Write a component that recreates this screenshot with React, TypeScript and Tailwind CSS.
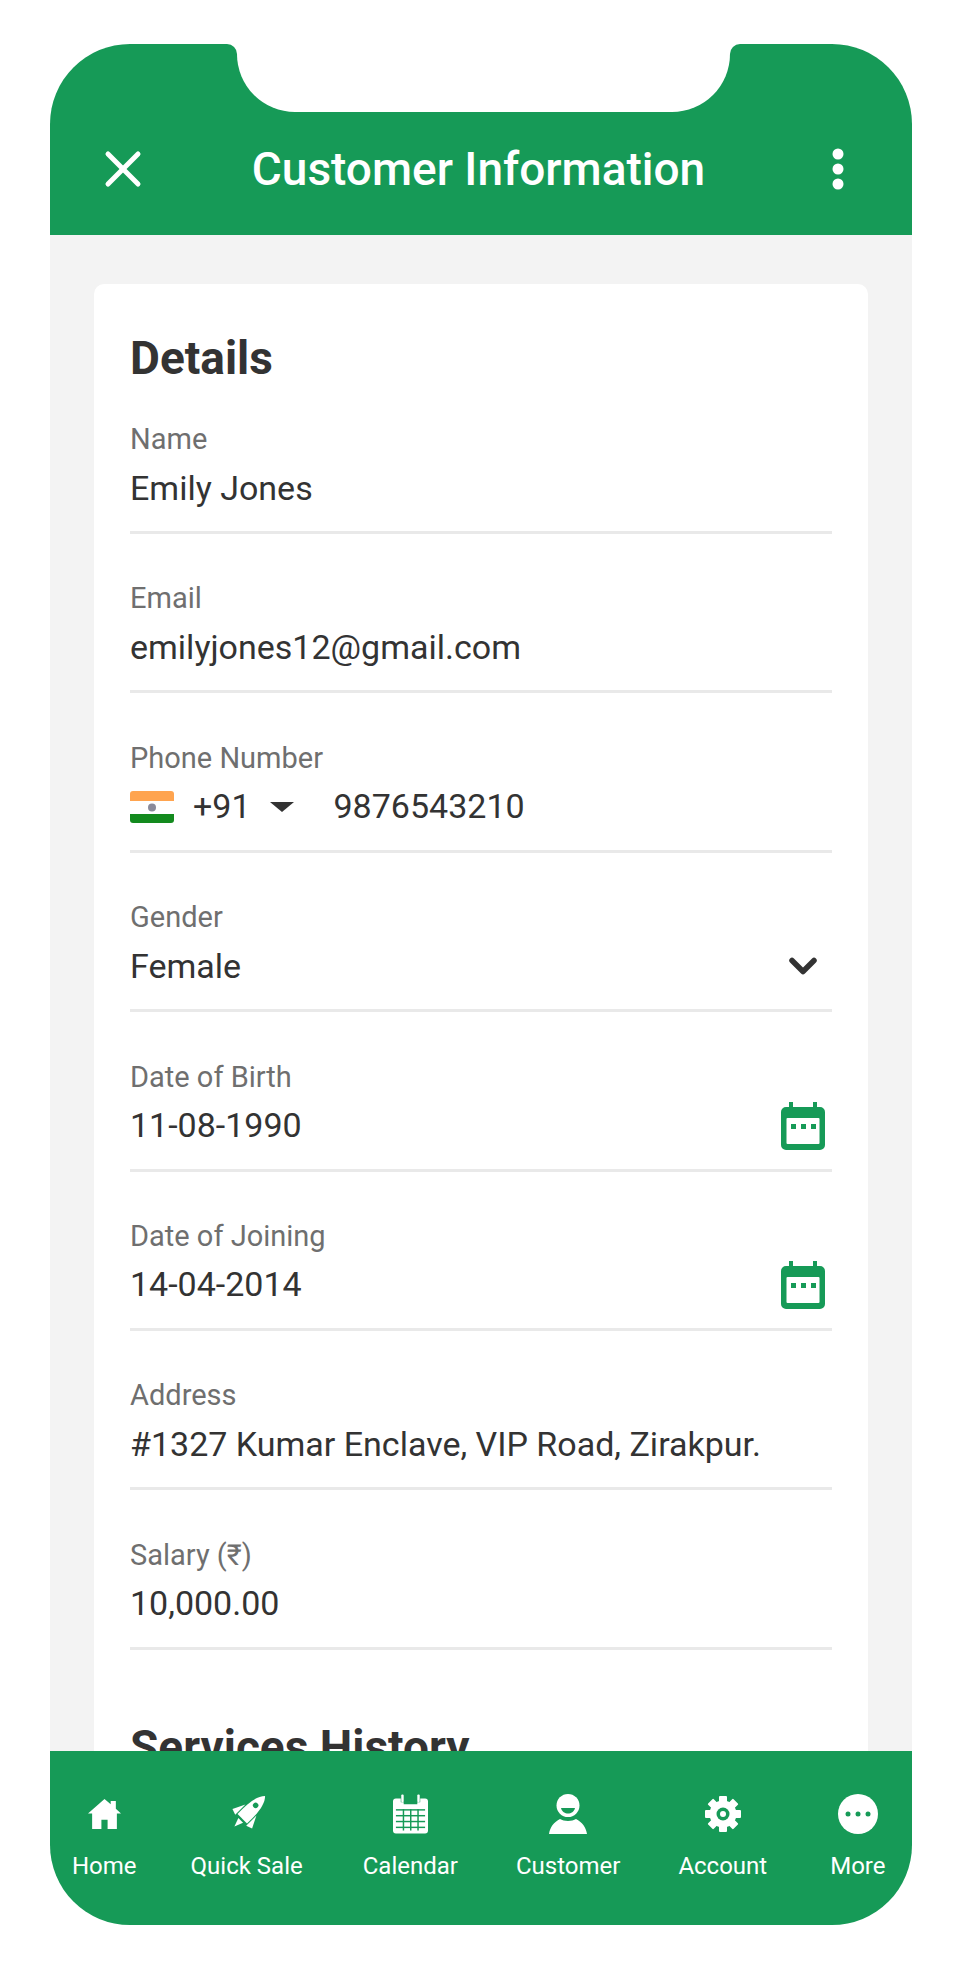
import React from 'react';
import { X, ChevronDown } from 'lucide-react';

function CalendarIcon() {
    return (
        <svg width="44" height="48" viewBox="0 0 44 48" className="text-[#169a57]">
            <path d="M8 0h4v5h20V0h4v5h3a5 5 0 0 1 5 5v33a5 5 0 0 1-5 5H5a5 5 0 0 1-5-5V10a5 5 0 0 1 5-5h3z" fill="currentColor" />
            <rect x="5.500" y="16" width="33" height="26" rx="1" fill="white" />
            <rect x="10" y="22" width="5" height="5" fill="currentColor" />
            <rect x="20" y="22" width="5" height="5" fill="currentColor" />
            <rect x="30" y="22" width="5" height="5" fill="currentColor" />
        </svg>
    );
}

function IndiaFlag() {
    return (
        <svg width="44" height="32" viewBox="0 0 44 32">
            <path d="M3 0h38a3 3 0 0 1 3 3v7H0V3a3 3 0 0 1 3-3z" fill="#ffa44f" />
            <rect y="10" width="44" height="13" fill="white" />
            <path d="M0 23h44v6a3 3 0 0 1-3 3H3a3 3 0 0 1-3-3z" fill="#138a1e" />
            <circle cx="22" cy="16.500" r="4" fill="#8a8a9a" />
        </svg>
    );
}

function Kebab() {
    return (
        <svg width="50" height="50" viewBox="0 0 50 50" fill="white">
            <circle cx="25" cy="10" r="5.500" />
            <circle cx="25" cy="25" r="5.500" />
            <circle cx="25" cy="40" r="5.500" />
        </svg>
    );
}

function NavHome() {
    return (
        <svg width="33" height="30" viewBox="0 0 32 29" fill="white">
            <path d="M16 0L22 5V2h5v7.500L32 14H28V29H19V20H13V29H4V14H0z" />
        </svg>
    );
}

function NavRocket() {
    return (
        <svg width="40" height="40" viewBox="0 0 36 36" fill="white">
            <g transform="rotate(45 18 18) translate(0 1)">
                <path d="M18-6C23-1 24.500 8 24 23H12C11.500 8 13-1 18-6z" />
                <circle cx="18" cy="6" r="2.500" fill="#169a57" />
                <path d="M11 12L5.500 23L11 25z" />
                <path d="M25 12L30.500 23L25 25z" />
                <path d="M15 25h6L18 33z" />
            </g>
        </svg>
    );
}

function NavCalendar() {
    return (
        <svg width="35" height="40" viewBox="0 0 36 40" fill="white">
            <path d="M3 4h5v4h3v2h14v-2h3V4h5a3 3 0 0 1 3 3v30a3 3 0 0 1-3 3H3a3 3 0 0 1-3-3V7a3 3 0 0 1 3-3z" />
            <rect x="8.500" y="0" width="2.500" height="8" rx="1" />
            <rect x="25" y="0" width="2.500" height="8" rx="1" />
            <g fill="#169a57">
                <rect x="3" y="15" width="30" height="1.500" />
                <rect x="3" y="21" width="30" height="1.500" />
                <rect x="3" y="27" width="30" height="1.500" />
                <rect x="3" y="33" width="30" height="1.500" />
                <rect x="10" y="15" width="1.500" height="22" />
                <rect x="17.500" y="15" width="1.500" height="22" />
                <rect x="25" y="15" width="1.500" height="22" />
            </g>
        </svg>
    );
}

function NavCustomer() {
    return (
        <svg width="38" height="40" viewBox="0 0 38 40" fill="white">
            <circle cx="19" cy="11.500" r="11.500" />
            <path d="M12 14h14c-1 4-4 5.500-7 5.500s-6-1.500-7-5.500z" fill="#169a57" />
            <path d="M0 40c1-7 5-12 11-15 4 2.500 12 2.500 16 0 6 3 10 8 11 15z" />
        </svg>
    );
}

function NavGear() {
    return (
        <svg width="36" height="36" viewBox="0 0 36 36" fill="white">
            {[0, 45, 90, 135, 180, 225, 270, 315].map((deg) => (
                <rect key={deg} x="14" y="0" width="8" height="8" rx="1" transform={`rotate(${deg} 18 18)`} />
            ))}
            <circle cx="18" cy="18" r="13.500" />
            <circle cx="18" cy="18" r="6.500" fill="#169a57" />
            <circle cx="18" cy="18" r="3" />
        </svg>
    );
}

function NavMore() {
    return (
        <svg width="40" height="40" viewBox="0 0 40 40">
            <circle cx="20" cy="20" r="20" fill="white" />
            <circle cx="10" cy="20" r="2.500" fill="#169a57" />
            <circle cx="20" cy="20" r="2.500" fill="#169a57" />
            <circle cx="30" cy="20" r="2.500" fill="#169a57" />
        </svg>
    );
}

function Field({ label, value, children }: { label: string; value?: string; children?: React.ReactNode }) {
    return (
        <div className="h-[159.4px]">
            <div className="text-[29px] leading-[38px] text-[#6f6f6f]">{label}</div>
            <div className="mt-[8px] flex h-[44px] items-center justify-between text-[34px] text-[#333333]">
                {value && <span>{value}</span>}
                {children}
            </div>
            <div className="mt-[21px] h-[3px] bg-[#e9e9e9]" />
        </div>
    );
}

const navItems = [
    { label: 'Home', icon: <NavHome />, gap: '' },
    { label: 'Quick Sale', icon: <NavRocket />, gap: 'ml-[54px]' },
    { label: 'Calendar', icon: <NavCalendar />, gap: 'ml-[60px]' },
    { label: 'Customer', icon: <NavCustomer />, gap: 'ml-[58px]' },
    { label: 'Account', icon: <NavGear />, gap: 'ml-[58px]' },
    { label: 'More', icon: <NavMore />, gap: 'ml-[63px]' },
];

export default function App() {
    return (
        <div className="h-[1968px] w-[960px] overflow-hidden bg-white pt-[44px] pl-[50px] font-['Roboto',sans-serif]">
            <div className="flex h-[1881px] w-[862px] flex-col overflow-hidden rounded-[80px]">
                <header className="shrink-0">
                    <div className="flex h-[68px]">
                        <div className="w-[187px] rounded-tr-[10px] bg-[#169a57]" />
                        <div className="w-[493px] bg-[#169a57]">
                            <div className="h-full rounded-b-[58px] bg-white" />
                        </div>
                        <div className="flex-1 rounded-tl-[10px] bg-[#169a57]" />
                    </div>
                    <div className="flex h-[123px] items-center justify-between bg-[#169a57] pr-[49px] pb-[10px] pl-[43px] text-white">
                        <X size={60} strokeWidth={2} />
                        <h1 className="pr-[9px] text-[46px] leading-[56px] font-medium">Customer Information</h1>
                        <Kebab />
                    </div>
                </header>

                <main className="min-h-0 flex-1 overflow-hidden bg-[#f3f3f3] px-[44px] pt-[49px]">
                    <div className="rounded-t-[10px] bg-white px-[36px] pt-[46px]">
                        <h2 className="text-[46px] leading-[56px] font-bold text-[#333333]">Details</h2>
                        <div className="mt-[34px]">
                            <Field label="Name" value="Emily Jones" />
                            <Field label="Email" value="emilyjones12@gmail.com" />
                            <Field label="Phone Number">
                                <div className="flex items-center">
                                    <IndiaFlag />
                                    <span className="ml-[19px]">+91</span>
                                    <span className="ml-[19px] h-0 w-0 border-x-[12px] border-t-[10px] border-x-transparent border-t-[#333333]" />
                                    <span className="ml-[40px]">9876543210</span>
                                </div>
                            </Field>
                            <Field label="Gender" value="Female">
                                <ChevronDown size={44} strokeWidth={3} className="mr-[7px]" />
                            </Field>
                            <Field label="Date of Birth" value="11-08-1990">
                                <div className="mr-[7px]"><CalendarIcon /></div>
                            </Field>
                            <Field label="Date of Joining" value="14-04-2014">
                                <div className="mr-[7px]"><CalendarIcon /></div>
                            </Field>
                            <Field label="Address" value="#1327 Kumar Enclave, VIP Road, Zirakpur." />
                            <Field label="Salary (₹)" value="10,000.00" />
                        </div>
                        <h2 className="mt-[24px] text-[46px] leading-[56px] font-bold text-[#333333]">Services History</h2>
                    </div>
                </main>

                <nav className="flex h-[174px] shrink-0 items-start bg-[#169a57] pt-[42px] pl-[22px] text-white">
                    {navItems.map((item) => (
                        <div key={item.label} className={`flex flex-col items-center ${item.gap}`}>
                            <div className="flex h-[42px] items-center">{item.icon}</div>
                            <span className="mt-[16px] text-[24px] leading-[30px]">{item.label}</span>
                        </div>
                    ))}
                </nav>
            </div>
        </div>
    );
}
